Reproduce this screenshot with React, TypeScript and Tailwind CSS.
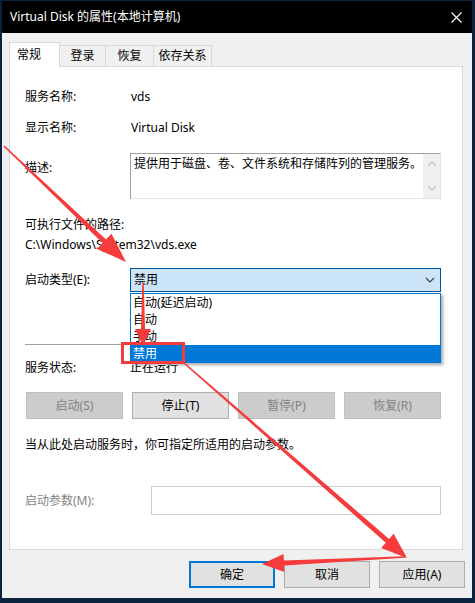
import React from "react";

const FONT = '"Noto Sans", "Noto Sans CJK SC", sans-serif';

type Pt = [number, number];

// tapered arrow: thin tail, wider shaft near the head, then a triangular head
function arrowPoints(tail: Pt, tip: Pt, w0: number, w1: number, hl: number, hw: number) {
  const dx = tip[0] - tail[0];
  const dy = tip[1] - tail[1];
  const len = Math.sqrt(dx * dx + dy * dy);
  const ux = dx / len;
  const uy = dy / len;
  const nx = -uy;
  const ny = ux;
  const bx = tip[0] - ux * hl;
  const by = tip[1] - uy * hl;
  const pts: Pt[] = [
    [tail[0] + nx * w0 / 2, tail[1] + ny * w0 / 2],
    [bx + nx * w1 / 2, by + ny * w1 / 2],
    [bx + nx * hw / 2, by + ny * hw / 2],
    tip,
    [bx - nx * hw / 2, by - ny * hw / 2],
    [bx - nx * w1 / 2, by - ny * w1 / 2],
    [tail[0] - nx * w0 / 2, tail[1] - ny * w0 / 2],
  ];
  return pts.map((p) => `${p[0].toFixed(1)},${p[1].toFixed(1)}`).join(" ");
}

function Chevron({ up = false, color = "#404040" }: { up?: boolean; color?: string }) {
  return (
    <svg width="10" height="6" viewBox="0 0 10 6">
      <path d={up ? "M1 5 L5 1 L9 5" : "M1 1 L5 5 L9 1"} fill="none" stroke={color} strokeWidth="1.2" />
    </svg>
  );
}

function Row({ label, children, className = "" }: { label: string; children?: React.ReactNode; className?: string }) {
  return (
    <div className={"flex items-center h-[20px] " + className}>
      <div className="w-[106px] shrink-0">{label}</div>
      <div>{children}</div>
    </div>
  );
}

function WinButton({ label, disabled = false, primary = false }: { label: string; disabled?: boolean; primary?: boolean }) {
  let cls = "h-[27px] flex items-center justify-center border ";
  if (disabled) cls += "bg-[#cccccc] border-[#bfbfbf] text-[#838383]";
  else if (primary) cls += "bg-[#e1e1e1] border-2 border-[#0078d7] text-black";
  else cls += "bg-[#e1e1e1] border-[#adadad] text-black";
  return <div className={cls}>{label}</div>;
}

export default function App() {
  const red = "#f53b3b";

  return (
    <div
      className="relative w-[475px] h-[603px] overflow-hidden bg-[#0c2340] pl-[2px] pt-[1px] text-[12px] leading-[20px] text-black"
      style={{ fontFamily: FONT }}
    >
      <div className="w-[470px] h-[597px] flex flex-col bg-[#f0f0f0]">
        {/* title bar */}
        <div className="h-[32px] bg-black flex items-center justify-between pl-[8px] pr-[10px] text-white">
          <span>Virtual Disk 的属性(本地计算机)</span>
          <svg width="11" height="11" viewBox="0 0 11 11">
            <path d="M0.5 0.5 L10.5 10.5 M10.5 0.5 L0.5 10.5" stroke="#fff" strokeWidth="1.1" />
          </svg>
        </div>

        <div className="flex-1 flex flex-col px-[7px]">
          {/* tabs */}
          <div className="mt-[9px] h-[24px] flex items-end">
            <div className="relative z-10 -mb-px w-[51px] h-[25px] bg-white border border-b-0 border-[#d9d9d9] flex items-center pl-[7px] pb-[1px]">
              常规
            </div>
            <div className="w-[46px] h-[21px] border border-l-0 border-b-0 border-[#d9d9d9] flex items-center justify-center">登录</div>
            <div className="w-[48px] h-[21px] border border-l-0 border-b-0 border-[#d9d9d9] flex items-center justify-center">恢复</div>
            <div className="w-[58px] h-[21px] border border-l-0 border-b-0 border-[#d9d9d9] flex items-center justify-center">依存关系</div>
          </div>

          {/* panel */}
          <div className="w-[454px] h-[484px] bg-white border border-[#d9d9d9] flex flex-col pl-[15px] pr-[21px]">
            <Row label="服务名称:" className="mt-[20px]">vds</Row>
            <Row label="显示名称:" className="mt-[11px]">Virtual Disk</Row>

            <div className="mt-[15px] flex items-start">
              <div className="w-[105px] mt-[5px] shrink-0">描述:</div>
              <div className="w-[311px] h-[46px] flex border border-[#a0a0a0] border-b-[#e3e3e3] border-r-[#e3e3e3]">
                <div className="flex-1 pl-[3px] pt-[0px]">提供用于磁盘、卷、文件系统和存储阵列的管理服务。</div>
                <div className="w-[17px] bg-[#f0f0f0] flex flex-col items-center justify-between py-[7px]">
                  <Chevron up color="#c2c2c2" />
                  <Chevron color="#c2c2c2" />
                </div>
              </div>
            </div>

            <div className="mt-[16px] h-[20px] flex items-center">可执行文件的路径:</div>
            <div className="h-[20px] flex items-center">C:\Windows\System32\vds.exe</div>

            {/* startup type combo with open list */}
            <div className="mt-[13px] flex items-center h-[24px]">
              <div className="w-[105px] shrink-0">启动类型(E):</div>
              <div className="relative w-[311px] h-[24px]">
                <div className="h-full bg-[#cce4f7] border border-[#005499] flex items-center justify-between pl-[3px] pr-[5px]">
                  <span>禁用</span>
                  <Chevron />
                </div>
                <div className="absolute left-0 top-[25px] z-20 w-[311px] bg-white border border-[#0078d7] shadow-[2px_2px_3px_rgba(0,0,0,0.35)] leading-[17px]">
                  <div className="h-[17px] pl-[2px]">自动(延迟启动)</div>
                  <div className="h-[17px] pl-[2px]">自动</div>
                  <div className="h-[17px] pl-[2px]">手动</div>
                  <div className="h-[17px] pl-[2px] bg-[#0078d7] text-white">禁用</div>
                </div>
              </div>
            </div>

            <div className="mt-[52px] h-px bg-[#a0a0a0]" />

            <Row label="服务状态:" className="mt-[13px]">
              <span className="-ml-[1px]">正在运行</span>
            </Row>

            <div className="mt-[14px] pl-[1px] grid grid-cols-4 gap-[9px]">
              <WinButton label="启动(S)" disabled />
              <WinButton label="停止(T)" />
              <WinButton label="暂停(P)" disabled />
              <WinButton label="恢复(R)" disabled />
            </div>

            <div className="mt-[16px] h-[20px] flex items-center">当从此处启动服务时，你可指定所适用的启动参数。</div>

            <div className="mt-[31px] h-[29px] flex items-center">
              <div className="w-[126px] shrink-0 text-[#838383]">启动参数(M):</div>
              <div className="flex-1 h-full border border-[#cccccc] bg-white" />
            </div>
          </div>

          {/* dialog buttons */}
          <div className="mt-[11px] flex justify-end gap-[9px]">
            <div className="w-[86px]"><WinButton label="确定" primary /></div>
            <div className="w-[86px]"><WinButton label="取消" /></div>
            <div className="w-[86px]"><WinButton label="应用(A)" /></div>
          </div>
        </div>
      </div>

      {/* red annotation arrows */}
      <svg className="absolute inset-0 z-50 pointer-events-none" width="475" height="603" viewBox="0 0 475 603">
        <polygon points={arrowPoints([4, 146], [126, 262], 1.5, 5, 30, 21)} fill={red} />
        <polygon points={arrowPoints([143, 283], [143, 346], 1.5, 4, 17, 16)} fill={red} />
        <rect x="122.5" y="343.5" width="61" height="19" fill="none" stroke={red} strokeWidth="3" />
        <polygon points={arrowPoints([184, 363], [407, 558], 1.5, 5, 26, 19)} fill={red} />
        <polygon points={arrowPoints([405, 557], [262, 564], 1.5, 5, 22, 18)} fill={red} />
      </svg>
    </div>
  );
}
